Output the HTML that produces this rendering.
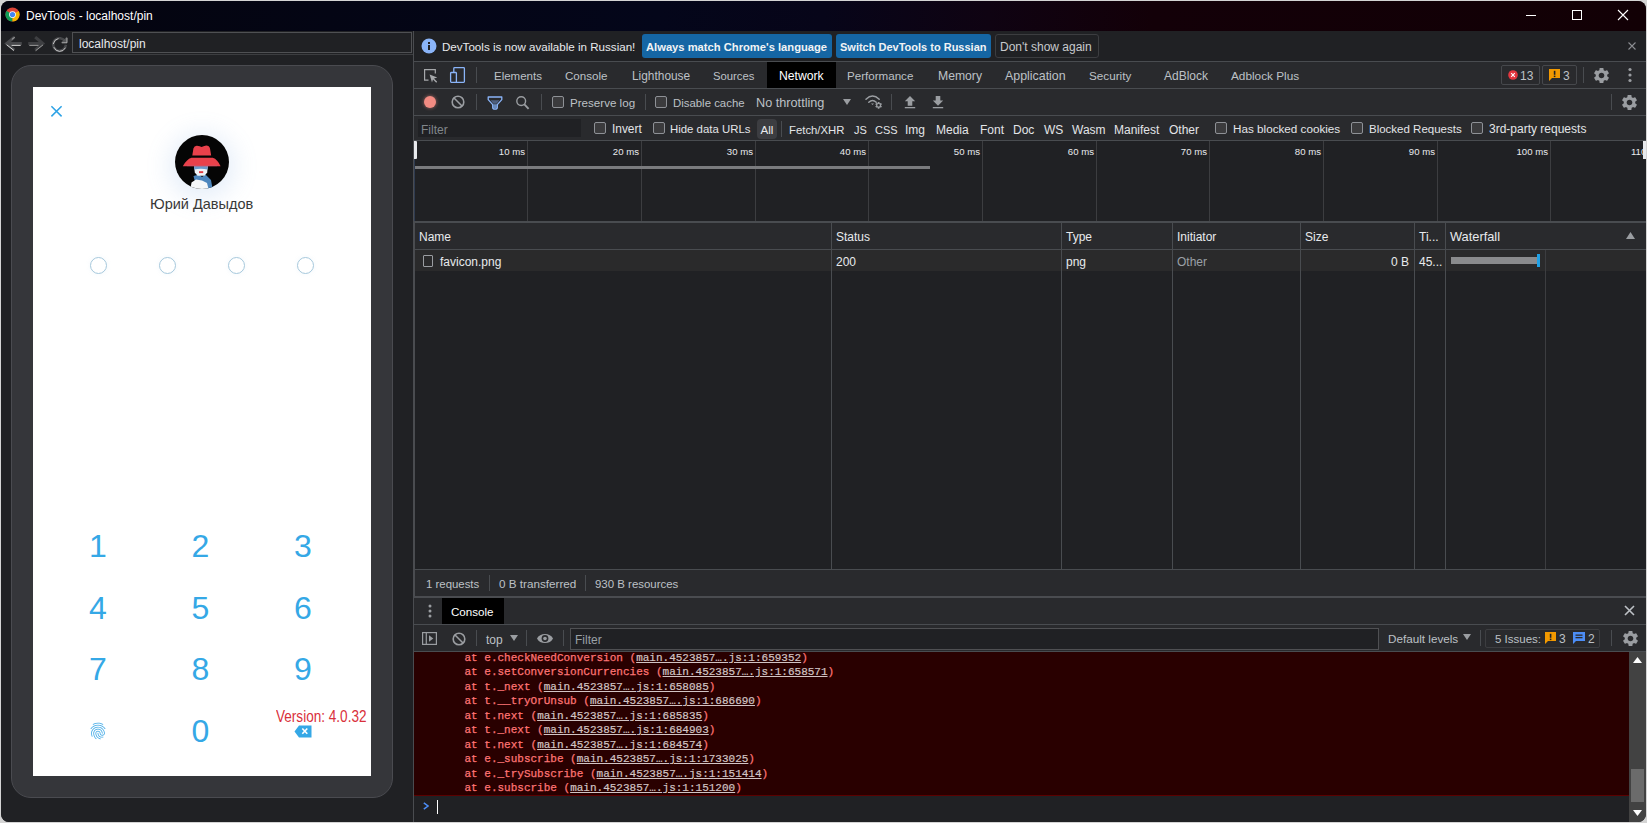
<!DOCTYPE html>
<html><head><meta charset="utf-8">
<style>
*{box-sizing:border-box}
html,body{margin:0;padding:0}
body{width:1647px;height:823px;overflow:hidden;background:#d4d4d4;font-family:"Liberation Sans",sans-serif;position:relative}
.a{position:absolute}
.t{position:absolute;white-space:nowrap;font-size:12px;line-height:14px;color:#e3e3e3}
#win{position:absolute;left:0;top:0;width:1647px;height:823px;clip-path:inset(1px 1px 1px 1px round 8px);background:#202124}
#title{position:absolute;left:0;top:0;width:1647px;height:31px;background:linear-gradient(90deg,#04040e 0%,#04061a 40%,#070519 50%,#0f0312 60%,#130008 70%,#120005 100%)}
.hl{position:absolute;height:1px;background:#494c50}
.vl{position:absolute;width:1px;background:#494c50}
.cb{position:absolute;width:12px;height:12px;border:1px solid #8e9196;border-radius:2px;background:#3b3b3d}
.sep{position:absolute;width:1px;height:16px;background:#494c50}
.mono{font-family:"Liberation Mono",monospace;font-size:11px;line-height:14.44px;color:#ff7474;white-space:pre;-webkit-text-stroke:0.25px #ff7474}
.lk{color:#d2c4c4;text-decoration:underline;-webkit-text-stroke:0.2px #d2c4c4}
</style></head>
<body>
<div id="win">
  <div id="title"></div>
  <!-- chrome icon -->
  <svg class="a" style="left:5px;top:7px" width="15" height="15" viewBox="0 0 16 16">
    <circle cx="8" cy="8" r="7.5" fill="#db4437"/>
    <path d="M8 8 L1.5 4.25 A7.5 7.5 0 0 0 8 15.5 Z" fill="#0f9d58"/>
    <path d="M8 8 L8 15.5 A7.5 7.5 0 0 0 14.5 4.25 Z" fill="#f4b400"/>
    <path d="M8 8 L1.5 4.25 L4.75 9.9 Z" fill="#0f9d58"/>
    <circle cx="8" cy="8" r="3.6" fill="#fff"/>
    <circle cx="8" cy="8" r="2.8" fill="#4285f4"/>
  </svg>
  <div class="t" style="left:26px;top:9px;color:#fff">DevTools - localhost/pin</div>
  <!-- window controls -->
  <div class="a" style="left:1526px;top:15px;width:10px;height:1px;background:#fff"></div>
  <div class="a" style="left:1572px;top:10px;width:10px;height:10px;border:1px solid #fff"></div>
  <svg class="a" style="left:1617px;top:9px" width="12" height="12" viewBox="0 0 12 12"><path d="M1 1L11 11M11 1L1 11" stroke="#fff" stroke-width="1.1"/></svg>

  <!-- ===== LEFT BROWSER PANE ===== -->
  <div class="a" style="left:0;top:31px;width:413px;height:792px;background:#202124"></div>
  <svg class="a" style="left:0;top:31px" width="72" height="24" viewBox="0 31 72 24">
    <g fill="none" stroke-linecap="square">
      <path d="M13.2 38L6.6 43.5L13.2 49.2M7.5 43.5H20.3" stroke="#48494c" stroke-width="3"/>
      <path d="M13.6 49.4L7 44.2M12 44.6H20.2" stroke="#d4d4d4" stroke-width="1" transform="translate(0 0.8)"/>
      <path d="M12.2 39.2L14.4 37.4" stroke="#bfbfbf" stroke-width="0.9" stroke-dasharray="1.2 0.8"/>
      <path d="M36.3 38L42.9 43.5L36.3 49.2M42 43.5H29.7" stroke="#3e3f42" stroke-width="3"/>
      <path d="M36 49.6L42.6 44.4M29.8 44.6H38" stroke="#9a9a9a" stroke-width="1" transform="translate(0 0.8)"/>
      <path d="M65 41.5A6.3 6.3 0 1 0 65.6 46" stroke="#47484b" stroke-width="2.6"/>
      <path d="M54 47A6.3 6.3 0 0 0 65.3 47.5M53.3 43A6.3 6.3 0 0 1 58 38" stroke="#d0d0d0" stroke-width="0.9" transform="translate(0 0.6)"/>
    </g>
    <path d="M67 36.4V42.8H60.8Z" fill="#555659"/>
    <path d="M67 37.8V42.8H61.8" fill="none" stroke="#c8c8c8" stroke-width="0.8"/>
  </svg>
  <div class="a" style="left:72px;top:32px;width:340px;height:21px;border:1px solid #4f5053;background:#202124"></div>
  <div class="t" style="left:79px;top:37px;color:#e8eaed">localhost/pin</div>
  <div class="hl" style="left:0;top:54px;width:413px;background:#3c3d40"></div>

  <!-- device frame -->
  <div class="a" style="left:11px;top:65px;width:382px;height:733px;border-radius:20px;background:#35363a;border:1px solid #4a4b50"></div>
  <div class="a" style="left:33px;top:87px;width:338px;height:689px;background:#fff"></div>

  <svg class="a" style="left:50px;top:105px" width="13" height="13" viewBox="0 0 13 13"><path d="M1.4 1.2L11.6 11.4M11.6 1.2L1.4 11.4" stroke="#2fa3e6" stroke-width="1.55"/></svg>
  <div class="a" style="left:175px;top:135px;width:54px;height:54px;border-radius:50%;box-shadow:0 4px 24px 6px rgba(110,160,220,.18)"></div>
  <svg class="a" style="left:175px;top:135px" width="54" height="54" viewBox="0 0 54 54">
<defs><clipPath id="cc"><circle cx="27" cy="27" r="27"/></clipPath></defs>
<circle cx="27" cy="27" r="27" fill="#050505"/>
<g clip-path="url(#cc)">
<path d="M18.5 41L24 39.5L27 42L30.5 39.5L36 45L38 56L31.5 56L31 49L27 46L20 47Z" fill="#4d86bd"/>
<path d="M15 56L16.5 47.5L21 44.5L27 45.5L32 48L34 56Z" fill="#f5f7f9"/>
<path d="M19 31H32.8L32.2 37.5L29.5 40.8H22.5L19.8 37.5Z" fill="#eef3f7"/>
<path d="M19 30.5H32.8L32.6 34.5Q26 33 19.2 34.5Z" fill="#6d9bcc"/>
<rect x="24" y="36.2" width="4.2" height="1.9" fill="#e23a40"/>
<path d="M17.3 20.5L18.4 13.5Q19.3 10.6 22 10.8Q25 11.2 26.6 12.1Q28.3 11.1 31.2 10.5Q34.3 10.6 35 13.4L36.2 20.5Z" fill="#e9414b"/>
<path d="M7.8 31.2Q11.5 24.2 16.5 22.7L37.8 22.7Q42.5 24.2 45.6 31.2Z" fill="#e9414b"/>
<rect x="12" y="30.2" width="30" height="1" fill="#c65a72" opacity=".6"/>
</g></svg>
  <div class="t" style="left:150px;top:196px;font-size:14.5px;line-height:17px;color:#383838">Юрий Давыдов</div>
  <div class="a" style="left:90.0px;top:257px;width:17px;height:17px;border-radius:50%;border:1px solid #a6c8dc;box-shadow:0 0 5px rgba(150,200,230,.12)"></div>
  <div class="a" style="left:159.0px;top:257px;width:17px;height:17px;border-radius:50%;border:1px solid #a6c8dc;box-shadow:0 0 5px rgba(150,200,230,.12)"></div>
  <div class="a" style="left:228.0px;top:257px;width:17px;height:17px;border-radius:50%;border:1px solid #a6c8dc;box-shadow:0 0 5px rgba(150,200,230,.12)"></div>
  <div class="a" style="left:297.0px;top:257px;width:17px;height:17px;border-radius:50%;border:1px solid #a6c8dc;box-shadow:0 0 5px rgba(150,200,230,.12)"></div>
  <div class="t" style="left:68px;top:528px;width:60px;text-align:center;font-size:32px;line-height:36px;color:#35a8e6">1</div>
  <div class="t" style="left:170.5px;top:528px;width:60px;text-align:center;font-size:32px;line-height:36px;color:#35a8e6">2</div>
  <div class="t" style="left:273px;top:528px;width:60px;text-align:center;font-size:32px;line-height:36px;color:#35a8e6">3</div>
  <div class="t" style="left:68px;top:590px;width:60px;text-align:center;font-size:32px;line-height:36px;color:#35a8e6">4</div>
  <div class="t" style="left:170.5px;top:590px;width:60px;text-align:center;font-size:32px;line-height:36px;color:#35a8e6">5</div>
  <div class="t" style="left:273px;top:590px;width:60px;text-align:center;font-size:32px;line-height:36px;color:#35a8e6">6</div>
  <div class="t" style="left:68px;top:651px;width:60px;text-align:center;font-size:32px;line-height:36px;color:#35a8e6">7</div>
  <div class="t" style="left:170.5px;top:651px;width:60px;text-align:center;font-size:32px;line-height:36px;color:#35a8e6">8</div>
  <div class="t" style="left:273px;top:651px;width:60px;text-align:center;font-size:32px;line-height:36px;color:#35a8e6">9</div>
  <div class="t" style="left:170.5px;top:713px;width:60px;text-align:center;font-size:32px;line-height:36px;color:#35a8e6">0</div>
  <svg class="a" style="left:88px;top:721px" width="20" height="20" viewBox="0 0 24 24"><path fill="#40a9e6" d="M17.81 4.47c-.08 0-.16-.02-.23-.06C15.66 3.42 14 3 12.01 3c-1.98 0-3.86.47-5.57 1.410-.24.13-.54.04-.68-.2-.13-.24-.04-.55.2-.68C7.820 2.520 9.860 2 12.01 2c2.13 0 3.98.47 6.03 1.52.25.13.34.43.21.67-.09.18-.26.28-.44.28zM3.5 9.72c-.1 0-.2-.03-.29-.09-.23-.16-.28-.47-.12-.7.99-1.4 2.25-2.5 3.75-3.27C9.98 4.04 14 4.03 17.15 5.65c1.5.77 2.76 1.86 3.75 3.25.16.22.11.54-.12.7-.23.16-.54.11-.7-.12-.9-1.26-2.04-2.25-3.39-2.94-2.87-1.47-6.54-1.47-9.4.01-1.36.7-2.5 1.7-3.4 2.96-.08.14-.23.21-.39.21zm6.25 12.07c-.13 0-.26-.05-.35-.15-.87-.87-1.34-1.43-2.01-2.64-.69-1.23-1.05-2.73-1.05-4.34 0-2.97 2.54-5.39 5.660-5.39s5.66 2.42 5.66 5.39c0 .28-.22.5-.5.5s-.5-.22-.5-.5c0-2.42-2.09-4.39-4.66-4.39-2.57 0-4.66 1.97-4.66 4.39 0 1.44.32 2.77.93 3.85.64 1.15 1.08 1.64 1.85 2.42.19.2.19.51 0 .71-.11.1-.24.15-.37.15zm7.17-1.85c-1.19 0-2.24-.3-3.1-.89-1.49-1.01-2.38-2.65-2.38-4.39 0-.28.22-.5.5-.5s.5.22.5.5c0 1.41.72 2.74 1.94 3.56.71.48 1.54.71 2.54.71.24 0 .64-.03 1.040-.1.27-.05.53.13.58.41.05.27-.13.53-.41.58-.57.11-1.07.12-1.21.12zM14.91 22c-.04 0-.09-.01-.13-.02-1.59-.44-2.63-1.03-3.72-2.1-1.4-1.39-2.17-3.24-2.17-5.22 0-1.62 1.38-2.94 3.08-2.94 1.7 0 3.08 1.32 3.08 2.94 0 1.07.93 1.94 2.08 1.94s2.080-.87 2.080-1.94c0-3.77-3.25-6.83-7.25-6.83-2.84 0-5.44 1.58-6.61 4.03-.39.81-.59 1.76-.59 2.8 0 .78.07 2.01.67 3.61.1.26-.03.55-.29.64-.26.1-.55-.04-.64-.29-.49-1.31-.73-2.61-.73-3.96 0-1.2.23-2.29.68-3.24 1.33-2.79 4.28-4.6 7.51-4.6 4.55 0 8.25 3.51 8.25 7.83 0 1.62-1.38 2.94-3.08 2.94s-3.08-1.32-3.080-2.94c0-1.07-.93-1.94-2.08-1.94s-2.08.87-2.08 1.94c0 1.71.66 3.31 1.87 4.51.95.94 1.86 1.46 3.27 1.85.27.07.42.35.35.61-.05.23-.26.38-.47.38z"/></svg>
  <svg class="a" style="left:294px;top:725px" width="18" height="13" viewBox="0 0 18 13"><path d="M5 0.5H17.5V12.5H5L0.5 6.5Z" fill="#35a8e6"/><path d="M8.3 3.5L13.3 8.8M13.3 3.5L8.3 8.8" stroke="#fff" stroke-width="1.6"/></svg>
  <div class="t" style="left:276px;top:708px;font-size:15.6px;line-height:18px;color:#d9303b;transform:scaleX(.87);transform-origin:0 0">Version: 4.0.32</div>
  <!-- ===== DEVTOOLS ===== -->
  <div class="a" style="left:413px;top:31px;width:1px;height:792px;background:#4a4c50;z-index:5"></div>
  <div class="a" style="left:414px;top:222px;width:1px;height:375px;background:#4a4c50;z-index:5"></div>
  <div class="a" style="left:414px;top:159px;width:1px;height:62px;background:#2f3b50;z-index:5"></div>
  <!-- info bar -->
  <div class="a" style="left:414px;top:31px;width:1233px;height:30px;background:#202124"></div>
  <svg class="a" style="left:421px;top:38px" width="16" height="16" viewBox="0 0 16 16"><circle cx="8" cy="8" r="7.5" fill="#8ab4f8"/><rect x="7" y="7" width="2" height="5" fill="#202124"/><rect x="7" y="4" width="2" height="2" fill="#202124"/></svg>
  <div class="t" style="left:442px;top:40px;color:#e8eaed;font-size:11.6px">DevTools is now available in Russian!</div>
  <div class="a" style="left:642px;top:34px;width:190px;height:24px;background:#1566a4;border-radius:3px"></div>
  <div class="t" style="left:646px;top:40px;color:#f1f3f4;font-weight:bold;font-size:11.2px">Always match Chrome's language</div>
  <div class="a" style="left:836px;top:34px;width:155px;height:24px;background:#1566a4;border-radius:3px"></div>
  <div class="t" style="left:840px;top:40px;color:#f1f3f4;font-weight:bold;font-size:11px">Switch DevTools to Russian</div>
  <div class="a" style="left:995px;top:34px;width:104px;height:24px;border:1px solid #3c3d40;border-radius:3px"></div>
  <div class="t" style="left:1000px;top:40px;color:#c8cacd">Don't show again</div>
  <svg class="a" style="left:1628px;top:42px" width="8" height="8" viewBox="0 0 8 8"><path d="M0.5 0.5L7.5 7.5M7.5 0.5L0.5 7.5" stroke="#8a8c90" stroke-width="1.1"/></svg>
  <div class="hl" style="left:414px;top:61px;width:1233px"></div>

  <!-- tabs bar -->
  <div class="a" style="left:414px;top:62px;width:1233px;height:26px;background:#292a2d"></div>
  <svg class="a" style="left:420px;top:64px" width="50" height="22" viewBox="420 64 50 22">
    <path d="M428.5 80.2H424.6V69.7H435.3V73.6" stroke="#a6a8ab" stroke-width="1.2" fill="none"/>
    <path d="M429.6 74.6L437.3 77.6L434 78.6L437.2 81.8L436.2 82.8L433 79.6L432 82.6Z" fill="#a6a8ab"/>
    <rect x="453.8" y="67.7" width="10.6" height="14.6" rx="0.8" stroke="#8ab4f8" stroke-width="1.3" fill="none"/>
    <rect x="450.6" y="72.5" width="5.8" height="9.8" rx="0.8" stroke="#8ab4f8" stroke-width="1.3" fill="#292a2d"/>
  </svg>
  <div class="sep" style="left:476px;top:67px"></div>
  <div class="t" style="left:494px;top:69px;color:#bdc1c6;font-size:11.5px">Elements</div>
  <div class="t" style="left:565px;top:69px;color:#bdc1c6;font-size:11.6px">Console</div>
  <div class="t" style="left:632px;top:69px;color:#bdc1c6;font-size:11.9px">Lighthouse</div>
  <div class="t" style="left:713px;top:69px;color:#bdc1c6;font-size:11.3px">Sources</div>
  <div class="a" style="left:767px;top:62px;width:69px;height:26px;background:#000"></div>
  <div class="t" style="left:779px;top:69px;color:#fff;font-size:12.2px">Network</div>
  <div class="t" style="left:847px;top:69px;color:#bdc1c6;font-size:11.6px">Performance</div>
  <div class="t" style="left:938px;top:69px;color:#bdc1c6;font-size:12.2px">Memory</div>
  <div class="t" style="left:1005px;top:69px;color:#bdc1c6;font-size:12.4px">Application</div>
  <div class="t" style="left:1089px;top:69px;color:#bdc1c6;font-size:11.7px">Security</div>
  <div class="t" style="left:1164px;top:69px;color:#bdc1c6;font-size:12px">AdBlock</div>
  <div class="t" style="left:1231px;top:69px;color:#bdc1c6;font-size:11.8px">Adblock Plus</div>
  <!-- badges -->
  <div class="a" style="left:1501px;top:65px;width:39px;height:20px;border:1px solid #46484c;border-radius:2px"></div>
  <svg class="a" style="left:1508px;top:70px" width="10" height="10" viewBox="0 0 10 10"><circle cx="5" cy="5" r="4.8" fill="#e3363f"/><path d="M3.2 3.2L6.8 6.8M6.8 3.2L3.2 6.8" stroke="#fff" stroke-width="1.1"/></svg>
  <div class="t" style="left:1520px;top:69px;color:#bdc1c6">13</div>
  <div class="a" style="left:1542px;top:65px;width:35px;height:20px;border:1px solid #46484c;border-radius:2px"></div>
  <svg class="a" style="left:1549px;top:69px" width="11" height="12" viewBox="0 0 11 12"><path d="M0 0H11V9H3L0 12Z" fill="#f29900"/><rect x="4.8" y="1.8" width="1.6" height="4" fill="#202124"/><rect x="4.8" y="6.6" width="1.6" height="1.5" fill="#202124"/></svg>
  <div class="t" style="left:1563px;top:69px;color:#bdc1c6">3</div>
  <div class="sep" style="left:1583px;top:67px"></div>
  <svg class="a" style="left:1592px;top:66px" width="19" height="19" viewBox="0 0 24 24"><path fill="#9a9da1" d="M19.14 12.94c.04-.3.06-.61.06-.94 0-.32-.02-.64-.07-.94l2.03-1.58c.18-.14.23-.41.12-.61l-1.92-3.32c-.12-.22-.37-.29-.59-.22l-2.39.96c-.5-.38-1.03-.7-1.62-.94l-.36-2.54c-.04-.24-.24-.41-.48-.41h-3.84c-.24 0-.43.17-.47.41l-.36 2.540c-.59.24-1.13.57-1.62.94l-2.39-.96c-.22-.08-.47 0-.59.22L2.74 8.87c-.12.21-.08.47.12.61l2.03 1.58c-.05.3-.09.63-.09.94s.02.64.07.94l-2.03 1.58c-.18.14-.23.41-.12.61l1.92 3.32c.12.22.37.29.59.22l2.39-.96c.5.38 1.03.7 1.62.94l.36 2.54c.05.24.24.41.48.41h3.84c.24 0 .44-.17.47-.41l.36-2.54c.59-.24 1.13-.56 1.62-.94l2.39.96c.22.08.47 0 .59-.22l1.92-3.32c.12-.22.07-.47-.12-.61l-2.01-1.58zM12 15.6c-1.98 0-3.6-1.62-3.6-3.6s1.62-3.6 3.6-3.6 3.6 1.62 3.6 3.6-1.62 3.6-3.6 3.6z"/></svg>
  <svg class="a" style="left:1628px;top:67px" width="4" height="16" viewBox="0 0 4 16"><circle cx="2" cy="2.5" r="1.6" fill="#9a9da1"/><circle cx="2" cy="8" r="1.6" fill="#9a9da1"/><circle cx="2" cy="13.5" r="1.6" fill="#9a9da1"/></svg>
  <div class="hl" style="left:414px;top:88px;width:1233px"></div>

  <!-- network toolbar -->
  <div class="a" style="left:414px;top:89px;width:1233px;height:26px;background:#292a2d"></div>
  <div class="a" style="left:424px;top:96px;width:12px;height:12px;border-radius:50%;background:#f28b82;box-shadow:0 0 3px 1px rgba(242,139,130,.35)"></div>
  <svg class="a" style="left:451px;top:95px" width="14" height="14" viewBox="0 0 14 14"><circle cx="7" cy="7" r="5.8" stroke="#9a9da1" stroke-width="1.6" fill="none"/><path d="M3 3L11 11" stroke="#9a9da1" stroke-width="1.6"/></svg>
  <div class="sep" style="left:476px;top:94px"></div>
  <svg class="a" style="left:487px;top:95px" width="16" height="16" viewBox="0 0 16 16"><path d="M3.6 5.3H12.4L9.6 8.7H6.4Z" fill="#4d5f80"/><path d="M6.2 9.2H9.8V12.8Q9.8 13.4 8 13.4Q6.2 13.4 6.2 12.8Z" fill="#6a8bbd"/><path d="M1.2 2H14.8V4.6L10.3 9.6V12.4Q10.3 14.1 8 14.1Q5.7 14.1 5.7 12.4V9.6L1.2 4.6Z" fill="none" stroke="#8ab4f8" stroke-width="1.3" stroke-linejoin="round"/></svg>
  <svg class="a" style="left:515px;top:95px" width="16" height="16" viewBox="0 0 16 16"><circle cx="6.2" cy="6.1" r="4.4" stroke="#9a9da1" stroke-width="1.4" fill="none"/><path d="M9.4 9.4L13.6 13.8" stroke="#9a9da1" stroke-width="1.9"/></svg>
  <div class="sep" style="left:541px;top:94px"></div>
  <div class="cb" style="left:552px;top:96px"></div>
  <div class="t" style="left:570px;top:96px;color:#bdc1c6;font-size:11.6px">Preserve log</div>
  <div class="sep" style="left:645px;top:94px"></div>
  <div class="cb" style="left:655px;top:96px"></div>
  <div class="t" style="left:673px;top:96px;color:#bdc1c6;font-size:11.4px">Disable cache</div>
  <div class="t" style="left:756px;top:96px;color:#bdc1c6;font-size:12.7px">No throttling</div>
  <svg class="a" style="left:843px;top:99px" width="8" height="6" viewBox="0 0 8 6"><path d="M0 0H8L4 6Z" fill="#9a9da1"/></svg>
  <svg class="a" style="left:864px;top:93px" width="20" height="17" viewBox="864 93 20 17"><path d="M866 99.2Q872.5 92.8 879.2 99.2M868.8 102.3Q872.5 98.8 876.2 102.3" stroke="#9a9da1" stroke-width="1.5" fill="none" stroke-linecap="round"/><path d="M871 103.6H874L872.5 105Z" fill="#9a9da1"/><g transform="translate(874.4 101.1) scale(0.35)"><path fill="#9a9da1" d="M19.14 12.94c.04-.3.06-.61.06-.94 0-.32-.02-.64-.07-.94l2.03-1.58c.18-.14.23-.41.12-.61l-1.920-3.32c-.12-.22-.37-.29-.59-.22l-2.39.96c-.5-.38-1.03-.7-1.62-.94l-.36-2.54c-.04-.24-.24-.41-.48-.41h-3.84c-.24 0-.43.17-.47.41l-.36 2.54c-.59.24-1.13.57-1.62.94l-2.39-.96c-.22-.08-.47 0-.59.22L2.74 8.87c-.12.21-.08.47.12.61l2.03 1.58c-.05.3-.09.63-.09.94s.02.64.07.94l-2.03 1.58c-.18.14-.23.41-.12.61l1.92 3.32c.12.22.37.29.59.22l2.39-.96c.5.38 1.03.7 1.62.94l.36 2.54c.05.24.24.41.48.41h3.84c.24 0 .44-.17.47-.41l.36-2.54c.59-.24 1.13-.56 1.62-.94l2.39.96c.22.08.47 0 .59-.22l1.92-3.32c.12-.22.07-.47-.12-.61l-2.01-1.58zM12 15.6c-1.98 0-3.6-1.62-3.6-3.6s1.62-3.6 3.6-3.6 3.6 1.62 3.6 3.6-1.62 3.6-3.6 3.6z"/></g></svg>
  <div class="sep" style="left:891px;top:94px"></div>
  <svg class="a" style="left:904px;top:95px" width="12" height="14" viewBox="0 0 12 14"><path d="M6 1L11.2 6.3H8.3V10.7H3.7V6.3H0.8Z" fill="#9a9da1"/><rect x="0.8" y="12" width="10.4" height="1.3" fill="#9a9da1"/></svg>
  <svg class="a" style="left:932px;top:95px" width="12" height="14" viewBox="0 0 12 14"><path d="M6 10.7L11.2 5.4H8.3V1H3.7V5.4H0.8Z" fill="#9a9da1"/><rect x="0.8" y="12" width="10.4" height="1.3" fill="#9a9da1"/></svg>
  <div class="sep" style="left:1611px;top:94px"></div>
  <svg class="a" style="left:1620px;top:93px" width="19" height="19" viewBox="0 0 24 24"><path fill="#9a9da1" d="M19.14 12.94c.04-.3.06-.61.06-.94 0-.32-.02-.64-.07-.94l2.03-1.58c.18-.14.23-.41.12-.61l-1.92-3.32c-.12-.22-.37-.29-.59-.22l-2.39.96c-.5-.38-1.03-.7-1.62-.94l-.36-2.54c-.04-.24-.24-.41-.48-.41h-3.84c-.24 0-.43.17-.47.41l-.36 2.540c-.59.24-1.13.57-1.62.94l-2.39-.96c-.22-.08-.47 0-.59.22L2.74 8.87c-.12.21-.08.47.12.61l2.03 1.58c-.05.3-.09.63-.09.94s.02.64.07.94l-2.03 1.58c-.18.14-.23.41-.12.61l1.92 3.32c.12.22.37.29.59.22l2.39-.96c.5.38 1.03.7 1.62.94l.36 2.54c.05.24.24.41.48.41h3.84c.24 0 .44-.17.47-.41l.36-2.54c.59-.24 1.13-.56 1.62-.94l2.39.96c.22.08.47 0 .59-.22l1.92-3.32c.12-.22.07-.47-.12-.61l-2.01-1.58zM12 15.6c-1.98 0-3.6-1.62-3.6-3.6s1.62-3.6 3.6-3.6 3.6 1.62 3.6 3.6-1.62 3.6-3.6 3.6z"/></svg>
  <div class="hl" style="left:414px;top:115px;width:1233px"></div>

  <!-- filter row -->
  <div class="a" style="left:414px;top:116px;width:1233px;height:24px;background:#292a2d"></div>
  <div class="a" style="left:418px;top:119px;width:163px;height:18px;background:#202124"></div>
  <div class="t" style="left:421px;top:122.5px;color:#80868b">Filter</div>
  <div class="cb" style="left:594px;top:122px"></div>
  <div class="t" style="left:612px;top:122px;color:#e3e5e8;font-size:11.9px">Invert</div>
  <div class="cb" style="left:653px;top:122px"></div>
  <div class="t" style="left:670px;top:122px;color:#e3e5e8;font-size:11.4px">Hide data URLs</div>
  <div class="a" style="left:757px;top:119px;width:20px;height:20px;background:#3c3d41;border-radius:4px"></div>
  <div class="t" style="left:760.5px;top:123px;color:#e8eaed;font-size:11.6px">All</div>
  <div class="sep" style="left:781px;top:121px"></div>
  <div class="t" style="left:789px;top:123px;color:#e3e5e8;font-size:11.35px">Fetch/XHR</div>
  <div class="t" style="left:854px;top:123px;color:#e3e5e8;font-size:11px">JS</div>
  <div class="t" style="left:875px;top:123px;color:#e3e5e8;font-size:11px">CSS</div>
  <div class="t" style="left:905px;top:123px;color:#e3e5e8">Img</div>
  <div class="t" style="left:936px;top:123px;color:#e3e5e8">Media</div>
  <div class="t" style="left:980px;top:123px;color:#e3e5e8">Font</div>
  <div class="t" style="left:1013px;top:123px;color:#e3e5e8">Doc</div>
  <div class="t" style="left:1044px;top:123px;color:#e3e5e8">WS</div>
  <div class="t" style="left:1072px;top:123px;color:#e3e5e8">Wasm</div>
  <div class="t" style="left:1114px;top:123px;color:#e3e5e8">Manifest</div>
  <div class="t" style="left:1169px;top:123px;color:#e3e5e8">Other</div>
  <div class="cb" style="left:1215px;top:122px"></div>
  <div class="t" style="left:1233px;top:122px;color:#e3e5e8;font-size:11.7px">Has blocked cookies</div>
  <div class="cb" style="left:1351px;top:122px"></div>
  <div class="t" style="left:1369px;top:122px;color:#e3e5e8;font-size:11.5px">Blocked Requests</div>
  <div class="cb" style="left:1471px;top:122px"></div>
  <div class="t" style="left:1489px;top:122px;color:#e3e5e8">3rd-party requests</div>
  <div class="hl" style="left:414px;top:140px;width:1233px"></div>
  <div class="a" style="left:414px;top:141px;width:1233px;height:80px;background:#202124"></div>
  <div class="vl" style="left:527px;top:141px;height:80px;background:#3c3d40"></div>
  <div class="t" style="left:467px;top:145px;width:58px;text-align:right;font-size:9.6px;color:#e8eaed">10 ms</div>
  <div class="vl" style="left:641px;top:141px;height:80px;background:#3c3d40"></div>
  <div class="t" style="left:581px;top:145px;width:58px;text-align:right;font-size:9.6px;color:#e8eaed">20 ms</div>
  <div class="vl" style="left:755px;top:141px;height:80px;background:#3c3d40"></div>
  <div class="t" style="left:695px;top:145px;width:58px;text-align:right;font-size:9.6px;color:#e8eaed">30 ms</div>
  <div class="vl" style="left:868px;top:141px;height:80px;background:#3c3d40"></div>
  <div class="t" style="left:808px;top:145px;width:58px;text-align:right;font-size:9.6px;color:#e8eaed">40 ms</div>
  <div class="vl" style="left:982px;top:141px;height:80px;background:#3c3d40"></div>
  <div class="t" style="left:922px;top:145px;width:58px;text-align:right;font-size:9.6px;color:#e8eaed">50 ms</div>
  <div class="vl" style="left:1096px;top:141px;height:80px;background:#3c3d40"></div>
  <div class="t" style="left:1036px;top:145px;width:58px;text-align:right;font-size:9.6px;color:#e8eaed">60 ms</div>
  <div class="vl" style="left:1209px;top:141px;height:80px;background:#3c3d40"></div>
  <div class="t" style="left:1149px;top:145px;width:58px;text-align:right;font-size:9.6px;color:#e8eaed">70 ms</div>
  <div class="vl" style="left:1323px;top:141px;height:80px;background:#3c3d40"></div>
  <div class="t" style="left:1263px;top:145px;width:58px;text-align:right;font-size:9.6px;color:#e8eaed">80 ms</div>
  <div class="vl" style="left:1437px;top:141px;height:80px;background:#3c3d40"></div>
  <div class="t" style="left:1377px;top:145px;width:58px;text-align:right;font-size:9.6px;color:#e8eaed">90 ms</div>
  <div class="vl" style="left:1550px;top:141px;height:80px;background:#3c3d40"></div>
  <div class="t" style="left:1490px;top:145px;width:58px;text-align:right;font-size:9.6px;color:#e8eaed">100 ms</div>
  <div class="t" style="left:1631px;top:145px;font-size:9.6px;color:#e8eaed">110</div>
  <div class="a" style="left:414px;top:141px;width:3px;height:18px;background:#e8eaed;border-radius:0 1px 1px 0"></div>
  <div class="a" style="left:1643px;top:141px;width:3px;height:18px;background:#e8eaed"></div>
  <div class="a" style="left:414px;top:166px;width:516px;height:3px;background:#7a7b7e"></div>
  <div class="hl" style="left:414px;top:221px;width:1233px;height:1px;background:#494c50"></div>
  <div class="a" style="left:414px;top:222px;width:1233px;height:27px;background:#292a2d"></div>
  <div class="hl" style="left:414px;top:222px;width:1233px"></div>
  <div class="hl" style="left:414px;top:249px;width:1233px"></div>
  <div class="a" style="left:414px;top:250px;width:1233px;height:21px;background:#2a2a2b"></div>
  <div class="vl" style="left:831px;top:222px;height:347px"></div>
  <div class="vl" style="left:1061px;top:222px;height:347px"></div>
  <div class="vl" style="left:1172px;top:222px;height:347px"></div>
  <div class="vl" style="left:1300px;top:222px;height:347px"></div>
  <div class="vl" style="left:1414px;top:222px;height:347px"></div>
  <div class="vl" style="left:1445px;top:222px;height:347px"></div>
  <div class="vl" style="left:1545px;top:250px;height:319px;background:#3c3d40"></div>
  <div class="t" style="left:419px;top:230px;color:#e8eaed;font-size:12px">Name</div>
  <div class="t" style="left:836px;top:230px;color:#e8eaed;font-size:12px">Status</div>
  <div class="t" style="left:1066px;top:230px;color:#e8eaed;font-size:12px">Type</div>
  <div class="t" style="left:1177px;top:230px;color:#e8eaed;font-size:12px">Initiator</div>
  <div class="t" style="left:1305px;top:230px;color:#e8eaed;font-size:12px">Size</div>
  <div class="t" style="left:1419px;top:230px;color:#e8eaed;font-size:12px">Ti...</div>
  <div class="t" style="left:1450px;top:230px;color:#e8eaed;font-size:12.8px">Waterfall</div>
  <svg class="a" style="left:1626px;top:232px" width="9" height="7" viewBox="0 0 9 7"><path d="M0 7H9L4.5 0Z" fill="#9a9da1"/></svg>
  <div class="a" style="left:423px;top:255px;width:10px;height:12px;border:1px solid #9a9da1;border-radius:1px"></div>
  <div class="t" style="left:440px;top:255px;color:#e8eaed">favicon.png</div>
  <div class="t" style="left:836px;top:255px;color:#e8eaed">200</div>
  <div class="t" style="left:1066px;top:255px;color:#e8eaed">png</div>
  <div class="t" style="left:1177px;top:255px;color:#9aa0a6">Other</div>
  <div class="t" style="left:1350px;top:255px;width:59px;text-align:right;color:#e8eaed">0 B</div>
  <div class="t" style="left:1419px;top:255px;color:#e8eaed">45...</div>
  <div class="a" style="left:1451px;top:257px;width:87px;height:7px;background:#8a8b8d"></div>
  <div class="a" style="left:1537px;top:254px;width:3px;height:13px;background:#1ea0e6"></div>
  <div class="hl" style="left:414px;top:569px;width:1233px"></div>
  <div class="a" style="left:414px;top:570px;width:1233px;height:27px;background:#292a2d"></div>
  <div class="t" style="left:426px;top:577px;color:#bdc1c6;font-size:11.4px">1 requests</div>
  <div class="sep" style="left:489px;top:575px"></div>
  <div class="t" style="left:499px;top:577px;color:#bdc1c6;font-size:11.7px">0 B transferred</div>
  <div class="sep" style="left:585px;top:575px"></div>
  <div class="t" style="left:595px;top:577px;color:#bdc1c6;font-size:11.45px">930 B resources</div>
  <div class="hl" style="left:414px;top:596px;width:1233px;height:2px;background:#4a4c50"></div>
  <div class="a" style="left:414px;top:598px;width:1233px;height:26px;background:#292a2d"></div>
  <svg class="a" style="left:428px;top:604px" width="4" height="14" viewBox="0 0 4 14"><circle cx="2" cy="2" r="1.5" fill="#9a9da1"/><circle cx="2" cy="7" r="1.5" fill="#9a9da1"/><circle cx="2" cy="12" r="1.5" fill="#9a9da1"/></svg>
  <div class="a" style="left:442px;top:598px;width:62px;height:26px;background:#000"></div>
  <div class="t" style="left:451px;top:605px;color:#fff;font-size:11.6px">Console</div>
  <svg class="a" style="left:1624px;top:605px" width="11" height="11" viewBox="0 0 11 11"><path d="M1 1L10 10M10 1L1 10" stroke="#bdc1c6" stroke-width="1.6"/></svg>
  <div class="hl" style="left:414px;top:624px;width:1233px"></div>
  <div class="a" style="left:414px;top:625px;width:1233px;height:26px;background:#292a2d"></div>
  <svg class="a" style="left:422px;top:632px" width="15" height="13" viewBox="0 0 15 13"><rect x="0.6" y="0.6" width="13.8" height="11.8" stroke="#9a9da1" stroke-width="1.2" fill="none"/><path d="M4.3 1V12" stroke="#9a9da1" stroke-width="1.2"/><path d="M7 3.3L11.3 6.5L7 9.7Z" fill="#9a9da1"/></svg>
  <svg class="a" style="left:451.5px;top:631.7px" width="14" height="14" viewBox="0 0 14 14"><circle cx="7" cy="7" r="5.8" stroke="#9a9da1" stroke-width="1.6" fill="none"/><path d="M3 3L11 11" stroke="#9a9da1" stroke-width="1.6"/></svg>
  <div class="sep" style="left:476px;top:630px"></div>
  <div class="t" style="left:486px;top:633px;color:#bdc1c6">top</div>
  <svg class="a" style="left:510px;top:635px" width="8" height="6" viewBox="0 0 8 6"><path d="M0 0H8L4 6Z" fill="#9a9da1"/></svg>
  <div class="sep" style="left:526px;top:630px"></div>
  <svg class="a" style="left:536px;top:632px" width="18" height="13" viewBox="0 0 18 13"><path d="M1 6.5C3.5 0.5 14.5 0.5 17 6.5C14.5 12.5 3.5 12.5 1 6.5Z" fill="#9a9da1"/><circle cx="9" cy="6.5" r="3.4" fill="#292a2d"/><circle cx="9" cy="6.5" r="1.8" fill="#9a9da1"/></svg>
  <div class="sep" style="left:563px;top:630px"></div>
  <div class="a" style="left:570px;top:628px;width:809px;height:22px;border:1px solid #4f5053;background:#202124"></div>
  <div class="t" style="left:575px;top:633px;color:#9aa0a6">Filter</div>
  <div class="t" style="left:1388px;top:632px;color:#bdc1c6;font-size:11.7px">Default levels</div>
  <svg class="a" style="left:1463px;top:634px" width="8" height="6" viewBox="0 0 8 6"><path d="M0 0H8L4 6Z" fill="#9a9da1"/></svg>
  <div class="sep" style="left:1480px;top:630px"></div>
  <div class="a" style="left:1485px;top:629px;width:115px;height:19px;border:1px solid #3c3d40;border-radius:2px"></div>
  <div class="t" style="left:1495px;top:632px;color:#bdc1c6;font-size:11.5px">5 Issues:</div>
  <svg class="a" style="left:1545px;top:632px" width="11" height="12" viewBox="0 0 11 12"><path d="M0 0H11V9H3L0 12Z" fill="#f29900"/><rect x="4.8" y="1.8" width="1.6" height="4" fill="#202124"/><rect x="4.8" y="6.6" width="1.6" height="1.5" fill="#202124"/></svg>
  <div class="t" style="left:1559px;top:632px;color:#bdc1c6">3</div>
  <svg class="a" style="left:1573px;top:632px" width="12" height="12" viewBox="0 0 12 12"><path d="M0 0H12V9H3L0 12Z" fill="#4c8df6"/><rect x="2.5" y="2.5" width="7" height="1.3" fill="#292a2d"/><rect x="2.5" y="5" width="7" height="1.3" fill="#292a2d"/></svg>
  <div class="t" style="left:1588px;top:632px;color:#bdc1c6">2</div>
  <div class="sep" style="left:1611px;top:630px"></div>
  <svg class="a" style="left:1621px;top:629px" width="19" height="19" viewBox="0 0 24 24"><path fill="#9a9da1" d="M19.14 12.94c.04-.3.06-.61.06-.94 0-.32-.02-.64-.07-.94l2.03-1.58c.18-.14.23-.41.12-.61l-1.92-3.32c-.12-.22-.37-.29-.59-.22l-2.39.96c-.5-.38-1.03-.7-1.62-.94l-.36-2.54c-.04-.24-.24-.41-.48-.41h-3.84c-.24 0-.43.17-.47.41l-.36 2.540c-.59.24-1.13.57-1.62.94l-2.39-.96c-.22-.08-.47 0-.59.22L2.74 8.87c-.12.21-.08.47.12.61l2.03 1.58c-.05.3-.09.63-.09.94s.02.64.07.94l-2.03 1.58c-.18.14-.23.41-.12.61l1.92 3.32c.12.22.37.29.59.22l2.39-.96c.5.38 1.03.7 1.62.94l.36 2.54c.05.24.24.41.48.41h3.84c.24 0 .44-.17.47-.41l.36-2.54c.59-.24 1.13-.56 1.62-.94l2.39.96c.22.08.47 0 .59-.22l1.92-3.32c.12-.22.07-.47-.12-.61l-2.01-1.58zM12 15.6c-1.98 0-3.6-1.62-3.6-3.6s1.62-3.6 3.6-3.6 3.6 1.62 3.6 3.6-1.62 3.6-3.6 3.6z"/></svg>
  <div class="hl" style="left:414px;top:651px;width:1233px"></div>
  <div class="a" style="left:414px;top:652px;width:1215px;height:144px;background:#290000"></div>
  <div class="a" style="left:414px;top:795px;width:1215px;height:1px;background:#5c0000"></div>
  <div class="a mono" style="left:464.5px;top:651px">at e.checkNeedConversion (<span class="lk">main.4523857….js:1:659352</span>)
at e.setConversionCurrencies (<span class="lk">main.4523857….js:1:658571</span>)
at t._next (<span class="lk">main.4523857….js:1:658085</span>)
at t.__tryOrUnsub (<span class="lk">main.4523857….js:1:686690</span>)
at t.next (<span class="lk">main.4523857….js:1:685835</span>)
at t._next (<span class="lk">main.4523857….js:1:684903</span>)
at t.next (<span class="lk">main.4523857….js:1:684574</span>)
at e._subscribe (<span class="lk">main.4523857….js:1:1733025</span>)
at e._trySubscribe (<span class="lk">main.4523857….js:1:151414</span>)
at e.subscribe (<span class="lk">main.4523857….js:1:151200</span>)</div>
  <div class="a" style="left:414px;top:796px;width:1215px;height:27px;background:#202124"></div>
  <svg class="a" style="left:423px;top:802px" width="6" height="8" viewBox="0 0 6 8"><path d="M0.8 0.8L5 4L0.8 7.2" stroke="#4c8df6" stroke-width="1.5" fill="none"/></svg>
  <div class="a" style="left:437px;top:800px;width:1px;height:14px;background:#fff"></div>
  <div class="a" style="left:1629px;top:652px;width:17px;height:171px;background:#424242"></div>
  <svg class="a" style="left:1633px;top:657px" width="9" height="6" viewBox="0 0 9 6"><path d="M0 6H9L4.5 0Z" fill="#fff"/></svg>
  <div class="a" style="left:1631px;top:769px;width:13px;height:33px;background:#6b6b6b"></div>
  <svg class="a" style="left:1633px;top:810px" width="9" height="6" viewBox="0 0 9 6"><path d="M0 0H9L4.5 6Z" fill="#fff"/></svg>
</div>
</body></html>
